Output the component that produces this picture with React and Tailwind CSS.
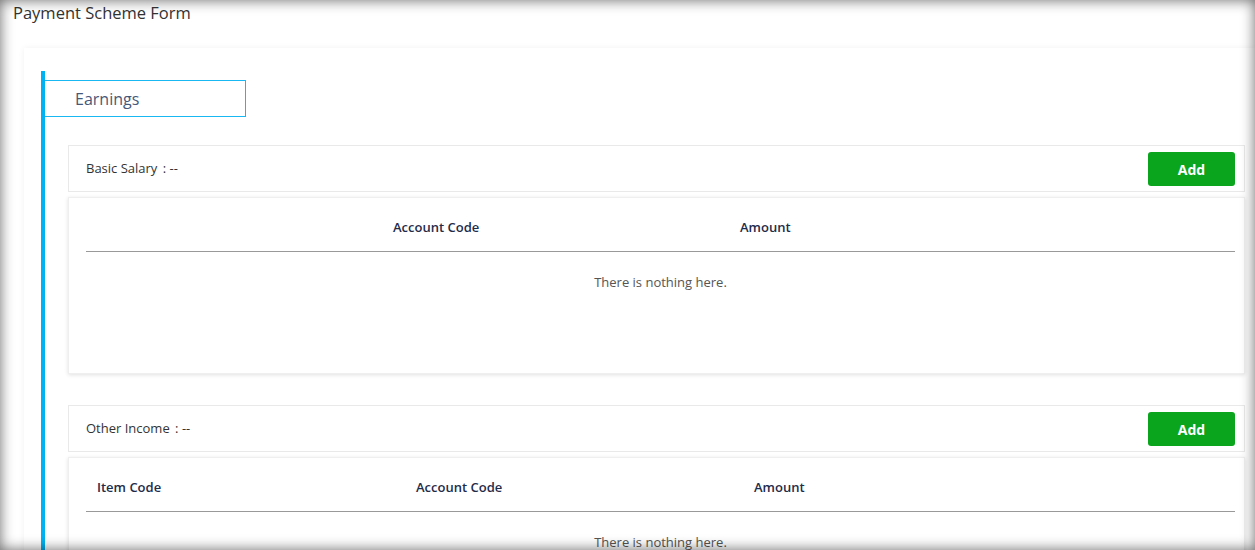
import React from 'react'

const Section = ({ title, columns }) => {
  return (
    <div className="mr-[10px]">
      {/* title row */}
      <div className="h-[47px] bg-white border border-[#e9e9e9] flex items-center justify-between pl-[17px] pr-[9px] pt-[1px]">
        <div className="text-[13px] text-[#333]">
          {title} <span className="ml-[2px]">: --</span>
        </div>
        <button className="w-[87px] h-[34px] rounded-[3px] bg-[#0aa51c] text-white text-[14px] font-bold">
          Add
        </button>
      </div>

      {/* table card */}
      <div className="mt-[5px] h-[177px] bg-white border border-[#efefef] shadow-[0_1px_4px_rgba(0,0,0,0.12)] pl-[17px] pr-[9px]">
        <div className="relative h-[54px] border-b border-[#999]">
          {columns.map((col) => (
            <div
              key={col.label}
              className={`absolute top-[20px] text-[13px] font-semibold text-[#1f2c4a] ${col.left}`}
            >
              {col.label}
            </div>
          ))}
        </div>
        <div className="pt-[21px] text-center text-[13px] text-[#555]">
          There is nothing here.
        </div>
      </div>
    </div>
  )
}

const App = () => {
  return (
    <div className="relative h-screen overflow-hidden bg-white font-['Open_Sans',sans-serif]">
      <div className="h-[30px] pl-[13px] pt-[1px] text-[16.5px] text-[#333]">
        Payment Scheme Form
      </div>

      <div className="ml-[24px] mt-[18px] bg-white shadow-[0_0_6px_rgba(0,0,0,0.06)] pt-[23px] pl-[17px] h-[600px]">
        <div className="border-l-4 border-[#00b2f2] pt-[9px] h-full">
          <div className="w-[201px] h-[37px] border border-l-0 border-[#1ab8f2] flex items-center pl-[30px] text-[16px] font-medium text-[#46587a]">
            Earnings
          </div>

          <div className="ml-[23px] mt-[28px] flex flex-col gap-[31px]">
            <Section
              title="Basic Salary"
              columns={[
                { label: 'Account Code', left: 'left-[307px]' },
                { label: 'Amount', left: 'left-[654px]' },
              ]}
            />
            <Section
              title="Other Income"
              columns={[
                { label: 'Item Code', left: 'left-[11px]' },
                { label: 'Account Code', left: 'left-[330px]' },
                { label: 'Amount', left: 'left-[668px]' },
              ]}
            />
          </div>
        </div>
      </div>

      {/* screenshot edge vignette */}
      <div className="pointer-events-none fixed inset-0 shadow-[inset_0_0_14px_rgba(0,0,0,0.6)]" />
    </div>
  )
}

export default App
